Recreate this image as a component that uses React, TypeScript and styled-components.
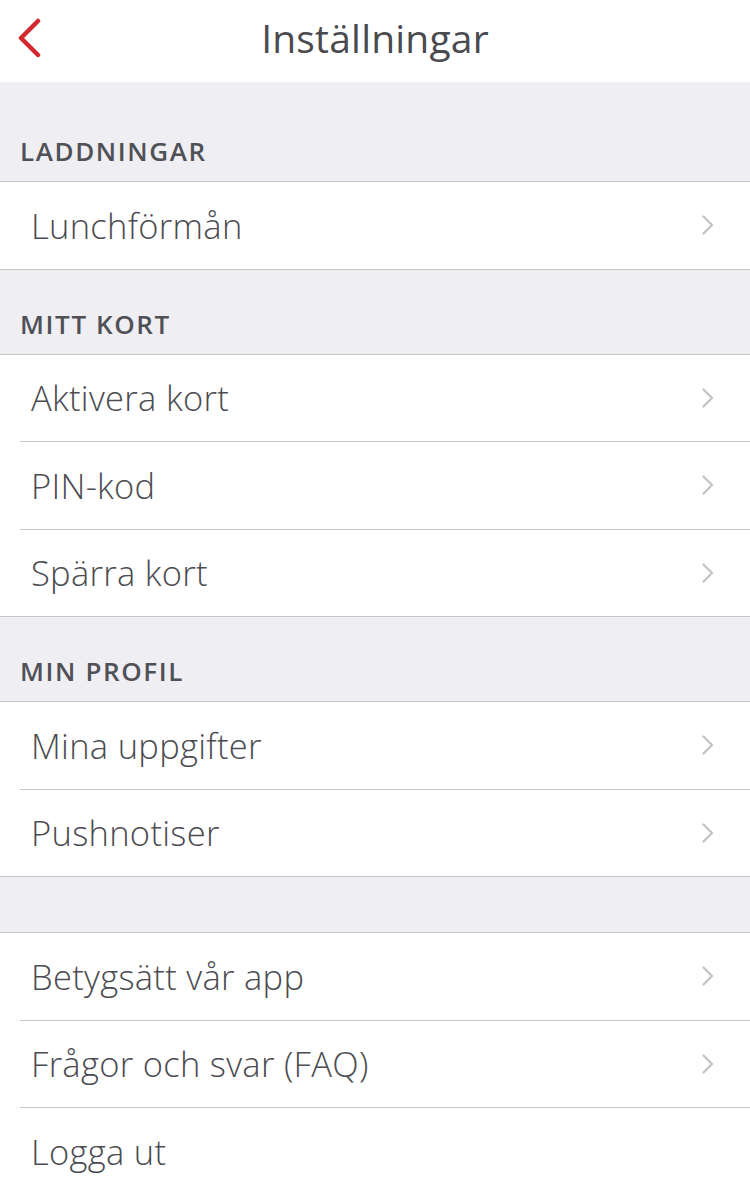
import React from 'react';
import styled, { createGlobalStyle } from 'styled-components';

const Global = createGlobalStyle`
  html, body { margin: 0; padding: 0; background: #ffffff; }
  body {
    font-family: "Open Sans", "Liberation Sans", sans-serif;
    -webkit-font-smoothing: antialiased;
  }
  * { box-sizing: border-box; }
`;

const Page = styled.div`
  width: 750px;
  height: 1192px;
  overflow: hidden;
  background: #efeef3;
  display: flex;
  flex-direction: column;
`;

const NavBar = styled.header`
  flex: none;
  height: 82px;
  padding-bottom: 7px;
  background: #ffffff;
  display: grid;
  grid-template-columns: 80px 1fr 80px;
  align-items: center;
`;

const BackButton = styled.button`
  border: 0;
  background: none;
  padding: 0 0 0 16px;
  display: flex;
  align-items: center;
  cursor: pointer;
`;

const Title = styled.h1`
  margin: 0;
  text-align: center;
  font-size: 39px;
  font-weight: 400;
  color: #4a4a4f;
  line-height: 1;
  letter-spacing: 0.2px;
`;

const SectionHeader = styled.div<{ $h: number }>`
  flex: none;
  height: ${(p) => p.$h}px;
  display: flex;
  align-items: flex-end;
  padding: 0 20px 17px;
  font-size: 26px;
  font-weight: 600;
  letter-spacing: 1.6px;
  line-height: 1;
  color: #505057;
  border-bottom: 1px solid #c8c7cc;
`;

const Group = styled.ul`
  flex: none;
  margin: 0;
  padding: 0;
  list-style: none;
  background: #ffffff;
  border-bottom: 1px solid #c8c7cc;
`;

const Row = styled.li`
  height: 86.5px;
  display: flex;
  align-items: center;
  justify-content: space-between;
  padding: 0 36px 0 31px;
  font-size: 34.5px;
  font-weight: 300;
  letter-spacing: 0.3px;
  color: #4b4b50;
  cursor: pointer;
`;

const Divider = styled.li`
  height: 1px;
  margin-left: 20px;
  background: #c8c7cc;
`;

const Chevron = () => (
  <svg width="12" height="20" viewBox="0 0 12 20" aria-hidden="true">
    <path d="M1.5 1.5 L10 10 L1.5 18.5" fill="none" stroke="#c4c4c9" strokeWidth="2.4" strokeLinecap="round" strokeLinejoin="round" />
  </svg>
);

const BackIcon = () => (
  <svg width="26" height="40" viewBox="0 0 26 40" aria-hidden="true">
    <path d="M22 3 L5 20 L22 37" fill="none" stroke="#d3282d" strokeWidth="4.5" strokeLinecap="round" strokeLinejoin="round" />
  </svg>
);

type Item = { label: string; chevron?: boolean };
type Section = { title: string; height: number; items: Item[] };

const sections: Section[] = [
  { title: 'LADDNINGAR', height: 100, items: [{ label: 'Lunchförmån', chevron: true }] },
  {
    title: 'MITT KORT',
    height: 85,
    items: [
      { label: 'Aktivera kort', chevron: true },
      { label: 'PIN-kod', chevron: true },
      { label: 'Spärra kort', chevron: true },
    ],
  },
  {
    title: 'MIN PROFIL',
    height: 85,
    items: [
      { label: 'Mina uppgifter', chevron: true },
      { label: 'Pushnotiser', chevron: true },
    ],
  },
  {
    title: '',
    height: 56,
    items: [
      { label: 'Betygsätt vår app', chevron: true },
      { label: 'Frågor och svar (FAQ)', chevron: true },
      { label: 'Logga ut' },
    ],
  },
];

export default function App() {
  return (
    <Page>
      <Global />
      <NavBar>
        <BackButton aria-label="Tillbaka">
          <BackIcon />
        </BackButton>
        <Title>Inställningar</Title>
        <span />
      </NavBar>
      {sections.map((s, si) => (
        <React.Fragment key={si}>
          <SectionHeader $h={s.height}>{s.title}</SectionHeader>
          <Group>
            {s.items.map((it, i) => (
              <React.Fragment key={it.label}>
                {i > 0 && <Divider />}
                <Row>
                  <span>{it.label}</span>
                  {it.chevron && <Chevron />}
                </Row>
              </React.Fragment>
            ))}
          </Group>
        </React.Fragment>
      ))}
    </Page>
  );
}
